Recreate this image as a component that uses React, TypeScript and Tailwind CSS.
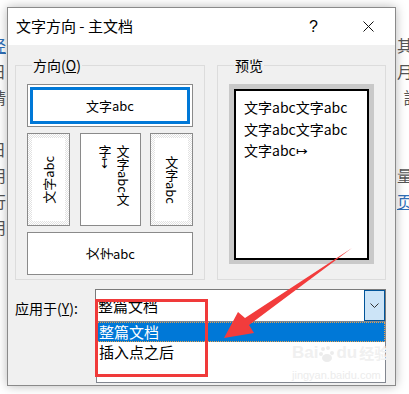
import React from 'react';

const docLines: { left: string; right: string; leftLink?: boolean; rightLink?: boolean }[] = [
  { left: '经', right: '其他', leftLink: true },
  { left: '日', right: '月份' },
  { left: '请', right: '設T' },
  { left: '', right: '' },
  { left: '日', right: '的' },
  { left: '用', right: '量，' },
  { left: '行', right: '页面', rightLink: true },
  { left: '用', right: '' },
];

const VerticalOption = ({ children, hatched }: { children: React.ReactNode; hatched?: boolean }) => (
  <div
    className={`h-[93px] border border-[#8a8a8a] ${
      hatched
        ? 'p-[4px] bg-[repeating-conic-gradient(#e2e2e2_0_25%,#ffffff_0_50%)] bg-[length:2px_2px]'
        : 'bg-white'
    }`}
  >
    <div className="h-full w-full bg-white flex items-center justify-center overflow-hidden">{children}</div>
  </div>
);

const App = () => {
  return (
    <div className="relative w-[409px] h-[394px] overflow-hidden bg-white font-['Noto_Sans_CJK_SC',sans-serif]">
      {/* document behind the dialog */}
      <div className="pt-[32px] text-[16px] leading-[26px] text-[#555]">
        {docLines.map((line, i) => (
          <div key={i} className="flex justify-between h-[26px] overflow-hidden">
            <span className={`-ml-[10px] ${line.leftLink ? 'text-[#2f6fb8] underline' : ''}`}>{line.left}</span>
            <span className={`-mr-[20px] ${line.rightLink ? 'text-[#2f6fb8] underline' : ''}`}>{line.right}</span>
          </div>
        ))}
      </div>

      {/* dialog */}
      <div className="absolute left-[7px] top-[7px] w-[389px] h-[379px] border border-[#8a8a8a] bg-[#f0f0f0] shadow-[0_0_10px_rgba(0,0,0,0.28)] flex flex-col">
        {/* title bar */}
        <div className="h-[37px] bg-white flex items-center pl-[8px] text-[15px] text-black">
          <span className="flex-1">文字方向 - 主文档</span>
          <span className="w-[56px] text-[16px] font-['Liberation_Sans',sans-serif] pl-[2px]">?</span>
          <span className="w-[32px] flex items-center">
            <svg width="11" height="11" viewBox="0 0 11 11">
              <path d="M0.5 0.5 L10.5 10.5 M10.5 0.5 L0.5 10.5" stroke="#111" strokeWidth="1" />
            </svg>
          </span>
        </div>

        {/* body */}
        <div className="flex-1 flex flex-col pt-[12px] pl-[7px] pr-[9px]">
          <div className="flex gap-[12px]">
            {/* 方向 */}
            <fieldset className="w-[192px] h-[223px] border border-[#dcdcdc] pt-[11px] px-[11px]">
              <legend className="ml-[5px] px-[1px] text-[14px] leading-[16px] text-black">
                方向(<span className="underline">O</span>)
              </legend>
              <div className="flex flex-col gap-[6px]">
                <div className="h-[43px] border border-[#8a8a8a] bg-white p-[2px]">
                  <div className="h-full border-[3px] border-[#0078d7] flex items-center justify-center text-[13px] text-black">
                    文字abc
                  </div>
                </div>
                <div className="flex justify-between">
                  <div className="w-[43px]">
                    <VerticalOption hatched>
                      <span className="-rotate-90 whitespace-nowrap text-[13px] text-black">文字abc</span>
                    </VerticalOption>
                  </div>
                  <div className="w-[61px] h-[93px] border border-[#8a8a8a] bg-white flex justify-end pt-[11px] pr-[8px]">
                    <div className="[writing-mode:vertical-rl] h-[66px] text-[13px] leading-[18px] text-black">
                      文字abc文字↦
                    </div>
                  </div>
                  <div className="w-[43px]">
                    <VerticalOption hatched>
                      <span className="[writing-mode:vertical-rl] whitespace-nowrap text-[13px] text-black">文字abc</span>
                    </VerticalOption>
                  </div>
                </div>
                <div className="h-[43px] border border-[#8a8a8a] bg-white flex items-center justify-center text-[13px] text-black">
                  <span className="inline-block -rotate-90 mr-[1px]">文</span>
                  <span className="inline-block -rotate-90 mr-[1px]">字</span>
                  <span>abc</span>
                </div>
              </div>
            </fieldset>

            {/* 预览 */}
            <fieldset className="w-[168px] h-[223px] border border-[#dcdcdc] pt-[11px] px-[11px]">
              <legend className="ml-[5px] px-[1px] text-[14px] leading-[16px] text-black">预览</legend>
              <div className="w-[145px] h-[180px] bg-[#c9c9c9] pt-[5px] pl-[5px] pr-[5px] pb-[4px]">
                <div className="h-full bg-white border-2 border-black pt-[6px] pl-[8px] text-[14px] leading-[21.5px] text-black">
                  <div>文字abc文字abc</div>
                  <div>文字abc文字abc</div>
                  <div>文字abc↦</div>
                </div>
              </div>
            </fieldset>
          </div>

          {/* 应用于 */}
          <div className="flex mt-[9px]">
            <div className="w-[80px] pt-[9px] text-[14px] leading-[20px] text-black">
              应用于(<span className="underline">Y</span>):
            </div>
            <div className="w-[291px] flex flex-col">
              <div className="h-[33px] border border-[#7a7a7a] bg-white flex">
                <div className="flex-1 pl-[2px] pt-[6px] text-[15px] leading-[20px] text-black">整篇文档</div>
                <div className="w-[21px] h-[31px] border border-[#005499] bg-[#cce4f7] flex items-center justify-center">
                  <svg width="9" height="5" viewBox="0 0 9 5">
                    <path d="M0.5 0.5 L4.5 4.5 L8.5 0.5" stroke="#333" strokeWidth="1" fill="none" />
                  </svg>
                </div>
              </div>
              <div className="-mt-px ml-px h-[62px] border border-[#828790] bg-white text-[15px] leading-[20px]">
                <div className="h-[20px] bg-[#0078d7] border border-dotted border-[#e9a24a] text-white pl-px leading-[18px]">
                  整篇文档
                </div>
                <div className="h-[20px] pl-[2px] text-black">插入点之后</div>
              </div>
            </div>
          </div>
        </div>
      </div>

      {/* watermark */}
      <div className="absolute left-[292px] top-[343px] flex items-end text-[#f0f0f0] font-['Liberation_Sans',sans-serif] font-bold text-[17px] leading-[20px] pointer-events-none">
        <span>Bai</span>
        <svg width="16" height="18" viewBox="0 0 16 18" className="mx-[1px]">
          <circle cx="4" cy="4" r="2" fill="#ececec" />
          <circle cx="9" cy="3" r="2" fill="#ececec" />
          <circle cx="2" cy="9" r="2" fill="#ececec" />
          <circle cx="13" cy="8" r="2" fill="#ececec" />
          <ellipse cx="8" cy="13" rx="5" ry="4" fill="#ececec" />
        </svg>
        <span>du</span>
        <span className="font-['Noto_Sans_CJK_SC',sans-serif] text-[15px] ml-[2px]">经验</span>
      </div>
      <div className="absolute left-[292px] top-[369px] text-[#ececec] font-['Liberation_Sans',sans-serif] text-[11px] leading-[12px] pointer-events-none">
        jingyan.baidu.com
      </div>

      {/* red annotation box */}
      <div className="absolute left-[95px] top-[299px] w-[113px] h-[78px] border-[3px] border-[#f03a3a] pointer-events-none" />

      {/* red arrow */}
      <svg className="absolute left-0 top-0 pointer-events-none" width="409" height="394" viewBox="0 0 409 394">
        <polygon points="352,248 249,325 254,333 224,338 238,312 245,318" fill="#f23c3c" />
      </svg>
    </div>
  );
};

export default App;
